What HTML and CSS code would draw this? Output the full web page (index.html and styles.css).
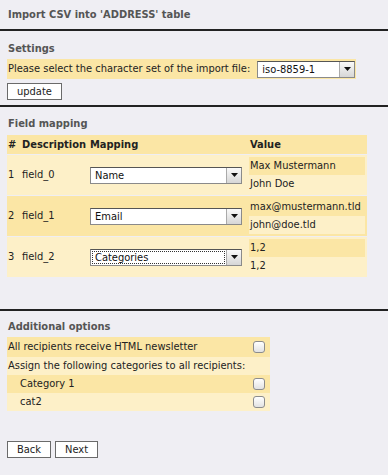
FILE: index.html
```html
<!DOCTYPE html>
<html lang="en">
<head>
    <meta charset="UTF-8">
    <title>Import CSV into 'ADDRESS' table</title>
    <link rel="stylesheet" href="styles.css">
</head>
<body>
    <h2 class="page-title">Import CSV into 'ADDRESS' table</h2>

    <!-- Settings -->
    <div class="section settings-section">
        <h3 class="section-title">Settings</h3>
        <table class="grid settings">
            <tr class="bg-dark">
                <td>Please select the character set of the import file:</td>
                <td>
                    <span class="sel sel-charset">
                        <select><option>iso-8859-1</option></select>
                        <span class="arrow"><svg width="7" height="4" viewBox="0 0 7 4"><path d="M0 0h7L3.5 4z" fill="#111"/></svg></span>
                    </span>
                </td>
            </tr>
        </table>
        <button class="btn">update</button>
    </div>

    <!-- Field mapping -->
    <div class="section mapping-section">
        <h3 class="section-title">Field mapping</h3>
        <table class="grid mapping">
            <tr class="bg-dark head">
                <th class="c-num">#</th>
                <th class="c-desc">Description</th>
                <th class="c-map">Mapping</th>
                <th class="c-val">Value</th>
            </tr>
            <tr class="bg-light">
                <td>1</td>
                <td>field_0</td>
                <td>
                    <span class="sel sel-map">
                        <select><option>Name</option></select>
                        <span class="arrow"><svg width="7" height="4" viewBox="0 0 7 4"><path d="M0 0h7L3.5 4z" fill="#111"/></svg></span>
                    </span>
                </td>
                <td class="vals">
                    <div class="bg-dark">Max Mustermann</div>
                    <div class="bg-light">John Doe</div>
                </td>
            </tr>
            <tr class="bg-dark">
                <td>2</td>
                <td>field_1</td>
                <td>
                    <span class="sel sel-map">
                        <select><option>Email</option></select>
                        <span class="arrow"><svg width="7" height="4" viewBox="0 0 7 4"><path d="M0 0h7L3.5 4z" fill="#111"/></svg></span>
                    </span>
                </td>
                <td class="vals">
                    <div class="bg-dark">max@mustermann.tld</div>
                    <div class="bg-light">john@doe.tld</div>
                </td>
            </tr>
            <tr class="bg-light">
                <td>3</td>
                <td>field_2</td>
                <td>
                    <span class="sel sel-map focused">
                        <select><option>Categories</option></select>
                        <span class="arrow"><svg width="7" height="4" viewBox="0 0 7 4"><path d="M0 0h7L3.5 4z" fill="#111"/></svg></span>
                    </span>
                </td>
                <td class="vals">
                    <div class="bg-dark">1,2</div>
                    <div class="bg-light">1,2</div>
                </td>
            </tr>
        </table>
    </div>

    <!-- Additional options -->
    <div class="section options-section">
        <h3 class="section-title">Additional options</h3>
        <table class="grid options">
            <tr class="bg-dark">
                <td>All recipients receive HTML newsletter</td>
                <td class="c-check"><input type="checkbox"></td>
            </tr>
            <tr class="bg-light">
                <td colspan="2">Assign the following categories to all recipients:</td>
            </tr>
            <tr class="bg-dark">
                <td class="indent">Category 1</td>
                <td class="c-check"><input type="checkbox"></td>
            </tr>
            <tr class="bg-light">
                <td class="indent">cat2</td>
                <td class="c-check"><input type="checkbox"></td>
            </tr>
        </table>

        <div class="actions">
            <button class="btn">Back</button>
            <button class="btn">Next</button>
        </div>
    </div>
</body>
</html>
```

FILE: styles.css
```css
/* page */
body {
    margin: 0;
    background-color: #efeef3;
    font-family: "DejaVu Sans Condensed", "DejaVu Sans", sans-serif;
    font-size: 11px;
    color: #222;
}

.page-title {
    margin: 0;
    padding: 8px 8px 7px;
    font-size: 11px;
    font-weight: bold;
    line-height: 14px;
    color: #555;
    border-bottom: 2px solid #222;
}

.section {
    padding: 10px 7px 5px;
    border-bottom: 2px solid #222;
}

.section-title {
    margin: 0 0 4px 1px;
    font-size: 11px;
    font-weight: bold;
    color: #555;
    line-height: 14px;
}

.settings-section {
    padding-top: 11px;
}

.settings-section .section-title {
    margin-bottom: 3px;
}

/* tables */
.grid {
    border-collapse: collapse;
}

.grid td, .grid th {
    padding: 0 1px;
    line-height: 14px;
    text-align: left;
    white-space: nowrap;
}

.bg-dark {
    background-color: #fbe6a5;
}

.bg-light {
    background-color: #fdf0c8;
}

/* settings */
.settings td {
    height: 20px;
}

.settings td:first-child {
    padding-right: 6px;
}

.btn {
    margin-top: 4px;
    height: 17px;
    padding: 0 9px;
    background: #fff;
    border: 1px solid #6a6a6a;
    border-radius: 0;
    font-family: "DejaVu Sans Condensed", "DejaVu Sans", sans-serif;
    font-size: 11px;
    color: #222;
    line-height: 14px;
}

/* select boxes */
.sel {
    display: inline-flex;
    align-items: stretch;
    height: 17px;
    background: #fff;
    border: 1px solid #8a8a8a;
    border-top-color: #555;
    box-sizing: border-box;
    vertical-align: middle;
}

.sel select {
    flex: 1;
    min-width: 0;
    appearance: none;
    -webkit-appearance: none;
    border: none;
    background: transparent;
    padding: 0 4px;
    margin: 0;
    font-family: "DejaVu Sans Condensed", "DejaVu Sans", sans-serif;
    font-size: 11px;
    color: #111;
    outline: none;
}

.sel .arrow {
    width: 14px;
    display: flex;
    align-items: center;
    justify-content: center;
    background: linear-gradient(#fafafa, #d6d6d6);
    border-left: 1px solid #aaa;
}

.sel-charset {
    width: 98px;
}

.sel-map {
    width: 152px;
}

.focused select {
    outline: 1px dotted #333;
    outline-offset: -2px;
}

/* field mapping */
.mapping-section {
    padding-bottom: 32px;
}

.mapping {
    width: 360px;
}

.mapping .head th {
    height: 19px;
    font-weight: bold;
}

.mapping tr + tr td {
    height: 38px;
    border-top: 1px solid #efeef3;
}

.c-num {
    width: 12px;
}

.c-desc {
    width: 66px;
}

.c-val {
    width: 116px;
}

.mapping td.vals {
    padding: 1px 2px 1px 0;
}

.vals div {
    height: 18px;
    line-height: 18px;
    padding-left: 1px;
}

/* additional options */
.options-section {
    border-bottom: none;
    padding-top: 9px;
}

.options-section .section-title {
    margin-bottom: 3px;
}

.options {
    width: 263px;
}

.options td {
    height: 18px;
}

.options tr:first-child td {
    height: 20px;
}

.options td.indent {
    padding-left: 13px;
}

.c-check {
    width: 16px;
    text-align: center;
}

.c-check input {
    appearance: none;
    -webkit-appearance: none;
    width: 12px;
    height: 12px;
    margin: 0;
    border: 1px solid #8c8c8c;
    border-radius: 3px;
    background: linear-gradient(#ffffff, #e2e2e2);
    vertical-align: middle;
}

.actions {
    margin-top: 26px;
    display: flex;
    gap: 4px;
}
```
